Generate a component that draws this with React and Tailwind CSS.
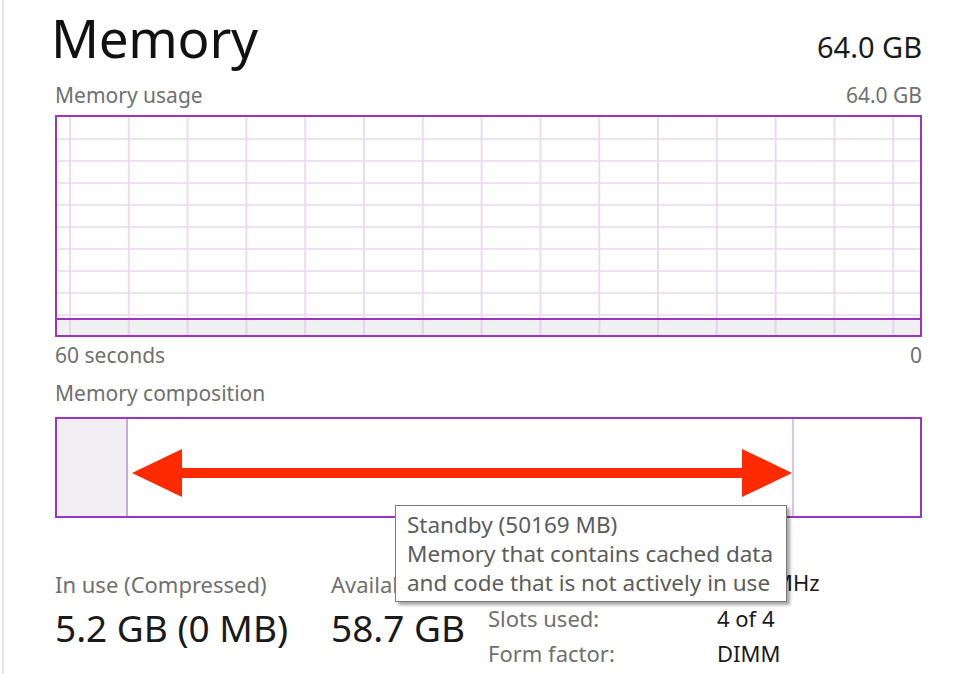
import React from "react";

const FONT = "font-['Noto_Sans','Open_Sans',sans-serif]";

function UsageGraph() {
  const vlines = [];
  for (let k = 0; k < 15; k++) vlines.push(13 + 58.8 * k);
  const hlines = [];
  for (let k = 0; k < 9; k++) hlines.push(22 + 22 * k);
  return (
    <div className="h-[222px] border-2 border-[#9b35c4] bg-white">
      <svg width="100%" height="218" viewBox="0 0 863 218" preserveAspectRatio="none" className="block">
        <rect x="0" y="203" width="863" height="15" fill="#f1f0f2" />
        {hlines.map((y) => (
          <line key={"h" + y} x1="0" x2="863" y1={y} y2={y} stroke="#efe2f3" strokeWidth="2" />
        ))}
        {vlines.map((x) => (
          <line key={"v" + x} x1={x} x2={x} y1="0" y2="218" stroke="#ecdcf1" strokeWidth="2" />
        ))}
        {vlines.map((x) => (
          <line key={"g" + x} x1={x} x2={x} y1="203" y2="218" stroke="#e2d8e6" strokeWidth="2" />
        ))}
        <line x1="0" x2="863" y1="202" y2="202" stroke="#9b35c4" strokeWidth="2" />
      </svg>
    </div>
  );
}

function CompositionBar() {
  return (
    <div className="relative h-[101px] border-2 border-[#9b35c4] flex bg-white">
      <div className="w-[71px] bg-[#f1eff3] border-r-2 border-[#c9a9dc]" />
      <div className="w-[666px] border-r-2 border-[#dcc4e8]" />
      <div className="flex-1" />
      <svg
        className="absolute left-[75px] top-[28px]"
        width="660"
        height="52"
        viewBox="0 0 660 52"
      >
        <rect x="46" y="21" width="568" height="10" fill="#ff2a00" />
        <polygon points="0,26 50,2 50,50" fill="#ff2a00" />
        <polygon points="660,26 610,2 610,50" fill="#ff2a00" />
      </svg>
    </div>
  );
}

export default function App() {
  return (
    <div className={`w-[960px] h-[674px] bg-white overflow-hidden relative ${FONT}`}>
      <div className="h-full ml-[2px] border-l-2 border-[#e6e6e6] pl-[51px] pr-[38px]">
        <div className="pt-[6px] flex items-baseline justify-between">
          <div className="-ml-[4px] text-[53px] leading-[64px] text-[#111] tracking-[-0.3px]">Memory</div>
          <div className="text-[29px] leading-[32px] text-[#1a1a1a]">64.0 GB</div>
        </div>
        <div className="mt-[14px] flex justify-between text-[21px] leading-[22px] text-[#707070]">
          <span>Memory usage</span>
          <span>64.0 GB</span>
        </div>
        <div className="mt-[9px]">
          <UsageGraph />
        </div>
        <div className="mt-[7px] flex justify-between text-[21px] leading-[22px] text-[#707070]">
          <span>60 seconds</span>
          <span>0</span>
        </div>
        <div className="mt-[16px] text-[21px] leading-[22px] text-[#707070]">Memory composition</div>
        <div className="mt-[13px]">
          <CompositionBar />
        </div>
        <div className="mt-[47px] flex items-start">
          <div className="w-[276px] pt-[6px]">
            <div className="text-[22px] leading-[26px] text-[#707070]">In use (Compressed)</div>
            <div className="mt-[11px] text-[37px] leading-[40px] text-[#1a1a1a]">5.2 GB (0 MB)</div>
          </div>
          <div className="w-[157px] pt-[6px]">
            <div className="text-[22px] leading-[26px] text-[#707070]">Available</div>
            <div className="mt-[11px] text-[37px] leading-[40px] text-[#1a1a1a]">58.7 GB</div>
          </div>
          <div className="text-[22px] leading-[35px]">
            <div className="flex">
              <span className="w-[229px] text-[#707070]">Speed:</span>
              <span className="text-[#1a1a1a]">2400 MHz</span>
            </div>
            <div className="flex mt-[1px]">
              <span className="w-[229px] text-[#707070]">Slots used:</span>
              <span className="text-[#1a1a1a]">4 of 4</span>
            </div>
            <div className="flex">
              <span className="w-[229px] text-[#707070]">Form factor:</span>
              <span className="text-[#1a1a1a]">DIMM</span>
            </div>
          </div>
        </div>
      </div>
      <div className="absolute left-[395px] top-[505px] w-[392px] h-[97px] bg-white border border-[#7a7a7a] shadow-[3px_3px_3px_rgba(0,0,0,0.35)] pl-[11px] pt-[4px] text-[22.5px] leading-[29px] text-[#5c5c5c] whitespace-nowrap">
        <div>Standby (50169 MB)</div>
        <div>Memory that contains cached data</div>
        <div>and code that is not actively in use</div>
      </div>
    </div>
  );
}
